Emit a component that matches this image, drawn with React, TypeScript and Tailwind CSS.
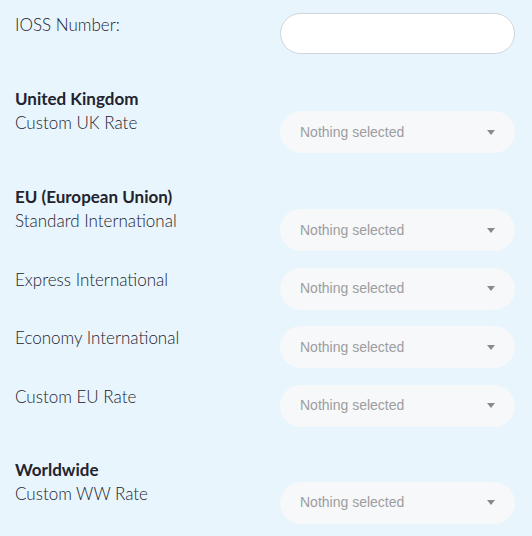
const font = { fontFamily: 'Lato, "Open Sans", sans-serif' };

function SelectBox() {
  return (
    <button
      type="button"
      className="flex h-[42px] w-[235px] shrink-0 items-center justify-between rounded-full bg-[#f6f8fa] px-[20px] text-left"
    >
      <span className="font-['Liberation_Sans',Arial,sans-serif] text-[14px] text-[#9d9d9d]">Nothing selected</span>
      <span className="h-0 w-0 border-x-[4.5px] border-t-[5px] border-x-transparent border-t-[#8a8a8a]" />
    </button>
  );
}

function RateRow({ label }: { label: string }) {
  return (
    <div className="flex items-start justify-between">
      <span className="text-[17px] font-light leading-[24px] text-[#22232f]">{label}</span>
      <SelectBox />
    </div>
  );
}

function Section({ title, rows, className }: { title: string; rows: string[]; className: string }) {
  return (
    <div className={`flex flex-col ${className}`}>
      <div className="text-[17px] font-bold leading-[24px] text-[#22232f]">{title}</div>
      <div className="flex flex-col gap-[16.5px]">
        {rows.map((r) => (
          <RateRow key={r} label={r} />
        ))}
      </div>
    </div>
  );
}

export default function App() {
  return (
    <div className="min-h-[536px] w-[532px] bg-[#e9f5fc] pl-[15px] pr-[17px] pt-[13px]" style={font}>
      <div className="flex items-start justify-between">
        <span className="text-[17px] font-light leading-[24px] text-[#22232f]">IOSS Number:</span>
        <input
          type="text"
          className="h-[41px] w-[235px] rounded-full border border-[#cfd5dc] bg-white px-4 outline-none"
        />
      </div>
      <Section title="United Kingdom" rows={['Custom UK Rate']} className="mt-[33px]" />
      <Section
        title="EU (European Union)"
        rows={['Standard International', 'Express International', 'Economy International', 'Custom EU Rate']}
        className="mt-[32px]"
      />
      <Section title="Worldwide" rows={['Custom WW Rate']} className="mt-[31px]" />
    </div>
  );
}
